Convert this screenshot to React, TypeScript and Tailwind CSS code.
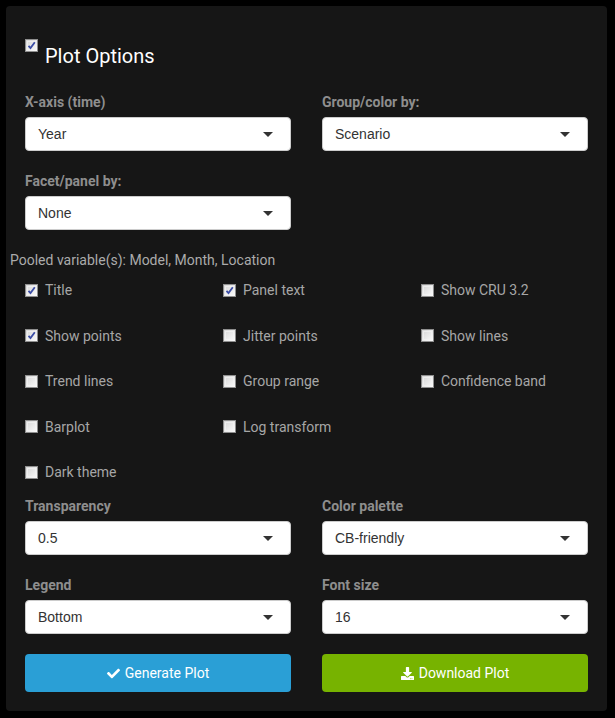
import { FaCheck, FaDownload } from 'react-icons/fa'

type SelectProps = {
  label: string
  value: string
}

function SelectBox({ label, value }: SelectProps) {
  return (
    <div className="flex flex-col">
      <label className="h-[20px] text-[14px] leading-[20px] font-bold text-[#8e8e8e] font-['Roboto',sans-serif]">{label}</label>
      <div className="mt-[5px] h-[34px] flex items-center justify-between bg-white border border-[#cccccc] rounded-[4px] pl-[12px] pr-[17px]">
        <span className="text-[14px] text-[#333333] font-['Liberation_Sans',Arial,sans-serif]">{value}</span>
        <span className="w-0 h-0 border-x-[5px] border-x-transparent border-t-[5px] border-t-[#333333]" />
      </div>
    </div>
  )
}

function Check({ checked }: { checked: boolean }) {
  return (
    <span className="relative shrink-0 w-[13px] h-[13px] border border-[#8f8f8f] bg-gradient-to-br from-[#d6d6d6] to-[#fbfbfb] flex items-center justify-center">
      <span className="absolute inset-[1px] border border-[#f4f4f4]/70" />
      {checked && (
        <svg className="relative w-[9px] h-[9px]" viewBox="0 0 9 9">
          <path d="M1.5 4.8 L3.5 7 L7.8 1.2" fill="none" stroke="#3b4da6" strokeWidth={1.8} />
        </svg>
      )}
    </span>
  )
}

function CheckItem({ label, checked = false }: { label: string; checked?: boolean }) {
  return (
    <div className="flex items-center h-[20px]">
      <Check checked={checked} />
      <span className="ml-[7px] text-[14px] leading-[20px] text-[#a6a6a6] font-['Roboto',sans-serif] whitespace-nowrap">{label}</span>
    </div>
  )
}

export default function App() {
  return (
    <div className="min-h-screen bg-black pt-[6px] pl-[6px] font-['Roboto',sans-serif]">
      <div className="w-[601px] bg-[#161616] rounded-[4px] pt-[33px] pb-[19px] pl-[19px] pr-[19px]">
        {/* header */}
        <div className="flex items-start">
          <Check checked />
          <h3 className="ml-[7px] mt-[5px] text-[20px] leading-[24px] text-white">Plot Options</h3>
        </div>

        <div className="mt-[24px] grid grid-cols-2 gap-x-[31px]">
          <SelectBox label="X-axis (time)" value="Year" />
          <SelectBox label="Group/color by:" value="Scenario" />
        </div>

        <div className="mt-[20px] grid grid-cols-2 gap-x-[31px]">
          <SelectBox label="Facet/panel by:" value="None" />
        </div>

        <p className="mt-[20px] -ml-[15px] text-[14px] leading-[20px] text-[#ababab]">Pooled variable(s): Model, Month, Location</p>

        <div className="mt-[10px] grid grid-cols-[198px_198px_1fr] auto-rows-[20px] gap-y-[25.5px]">
          <CheckItem label="Title" checked />
          <CheckItem label="Panel text" checked />
          <CheckItem label="Show CRU 3.2" />
          <CheckItem label="Show points" checked />
          <CheckItem label="Jitter points" />
          <CheckItem label="Show lines" />
          <CheckItem label="Trend lines" />
          <CheckItem label="Group range" />
          <CheckItem label="Confidence band" />
          <CheckItem label="Barplot" />
          <CheckItem label="Log transform" />
          <div />
          <CheckItem label="Dark theme" />
        </div>

        <div className="mt-[14px] grid grid-cols-2 gap-x-[31px]">
          <SelectBox label="Transparency" value="0.5" />
          <SelectBox label="Color palette" value="CB-friendly" />
        </div>

        <div className="mt-[20px] grid grid-cols-2 gap-x-[31px]">
          <SelectBox label="Legend" value="Bottom" />
          <SelectBox label="Font size" value="16" />
        </div>

        <div className="mt-[20px] grid grid-cols-2 gap-x-[31px]">
          <button className="h-[38px] flex items-center justify-center gap-[5px] bg-[#2a9fd6] rounded-[4px] text-white text-[14px]">
            <FaCheck className="w-[13px] h-[13px]" />
            Generate Plot
          </button>
          <button className="h-[38px] flex items-center justify-center gap-[5px] bg-[#77b300] rounded-[4px] text-white text-[14px]">
            <FaDownload className="w-[13px] h-[13px]" />
            Download Plot
          </button>
        </div>
      </div>
    </div>
  )
}
